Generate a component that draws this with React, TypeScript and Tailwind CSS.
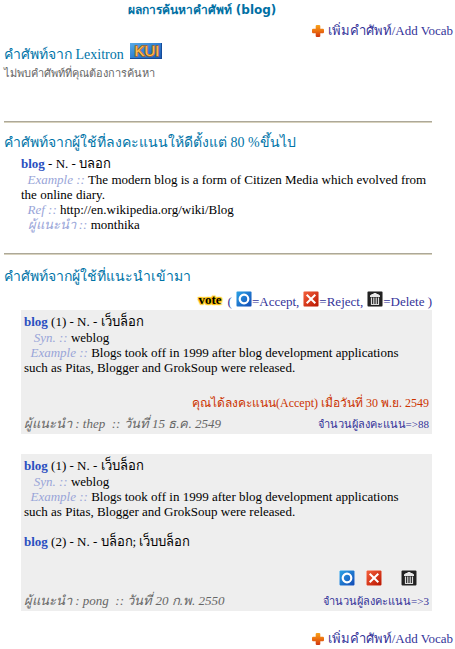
import type { ReactNode } from "react";

function PlusIcon() {
  return (
    <svg className="mr-1 h-3 w-3" viewBox="0 0 12 12" aria-hidden="true">
      <defs>
        <linearGradient id="plus" x1="0" y1="0" x2="0" y2="1">
          <stop offset="0" stopColor="#f7a21b" />
          <stop offset="0.5" stopColor="#ec7010" />
          <stop offset="1" stopColor="#cf3410" />
        </linearGradient>
      </defs>
      <path
        d="M4.500 0h3l.8.800V3.700H11.200l.8.800v3l-.8.800H8.300v2.900l-.8.800h-3l-.8-.8V8.300H.8L0 7.500v-3l.8-.8h2.900V.8z"
        fill="url(#plus)"
      />
    </svg>
  );
}

function AcceptIcon() {
  return (
    <svg className="h-4 w-4" viewBox="0 0 16 16" aria-hidden="true">
      <defs>
        <linearGradient id="accept" x1="0" y1="0" x2="1" y2="1">
          <stop offset="0" stopColor="#2ba3e6" />
          <stop offset="1" stopColor="#1349b4" />
        </linearGradient>
      </defs>
      <rect width="16" height="16" rx="1" fill="#f5f8fb" />
      <rect x="0.500" y="0.500" width="15" height="15" rx="1" fill="url(#accept)" />
      <circle cx="8" cy="8" r="4.300" fill="none" stroke="#fff" strokeWidth="2.200" />
    </svg>
  );
}

function RejectIcon() {
  return (
    <svg className="h-4 w-4" viewBox="0 0 16 16" aria-hidden="true">
      <defs>
        <linearGradient id="reject" x1="0" y1="0" x2="1" y2="1">
          <stop offset="0" stopColor="#f5603c" />
          <stop offset="1" stopColor="#b81500" />
        </linearGradient>
      </defs>
      <rect width="16" height="16" rx="1" fill="#fbf5f3" />
      <rect x="0.500" y="0.500" width="15" height="15" rx="1" fill="url(#reject)" />
      <path d="M3.700 3.700l8.600 8.600M12.300 3.700l-8.600 8.600" stroke="#fff" strokeWidth="2" />
    </svg>
  );
}

function DeleteIcon() {
  return (
    <svg className="h-4 w-4" viewBox="0 0 16 16" aria-hidden="true">
      <rect width="16" height="16" rx="1" fill="#f4f4f4" />
      <rect x="0.500" y="0.500" width="15" height="15" rx="1" fill="#222" />
      <path d="M3 6V4.500L5 3h1.500V2h3v1H11l2 1.500V6z" fill="#e8e8e8" />
      <path d="M4.500 6.500v7h7v-7M6.800 6.500v7M9.200 6.500v7" fill="none" stroke="#ddd" strokeWidth="1.200" />
    </svg>
  );
}

function KuiLogo() {
  return (
    <svg className="mb-2 ml-1.5 h-4 w-8" viewBox="0 0 32 16" role="img" aria-label="KUI">
      <defs>
        <linearGradient id="kui" x1="0" y1="0" x2="1" y2="1">
          <stop offset="0" stopColor="#5aace8" />
          <stop offset="0.5" stopColor="#2f7ed2" />
          <stop offset="1" stopColor="#1b58b0" />
        </linearGradient>
      </defs>
      <rect width="32" height="16" fill="url(#kui)" />
      <path d="M0 15.500h32M31.500 0v16" stroke="#164a98" />
      <text
        x="17"
        y="13"
        textAnchor="middle"
        fontFamily="'Liberation Sans Narrow', 'Liberation Sans', sans-serif"
        fontSize="15"
        fill="#ffbe50"
        stroke="#a86420"
        strokeWidth="1.500"
        paintOrder="stroke"
      >
        KUI
      </text>
    </svg>
  );
}

function AddVocab() {
  return (
    <div className="flex justify-end pr-0.5 text-[13px] leading-5 text-[#333399]">
      <a href="#add" className="flex items-center">
        <PlusIcon />
        เพิ่มคำศัพท์/Add Vocab
      </a>
    </div>
  );
}

function SectionTitle({ children }: { children: ReactNode }) {
  return (
    <h2 className="flex h-5 items-center text-[14px] leading-5 text-[#0074a8]">{children}</h2>
  );
}

function Rule() {
  return <hr className="h-0.5 border-t border-b border-t-[#aca899] border-b-[#d8d2bd]" />;
}

function Word({ no, children }: { no?: number; children: ReactNode }) {
  return (
    <p className="leading-4">
      <b className="text-[#2a4fc0]">blog</b> {no ? `(${no}) ` : ""}- N. - {children}
    </p>
  );
}

function Label({ children }: { children: ReactNode }) {
  return <i className="text-[#99a5d8]">{children} ::</i>;
}

function Weblog() {
  return (
    <>
      <Word no={1}>เว็บล็อก</Word>
      <p>
        &nbsp;&nbsp; <Label>Syn.</Label> weblog
      </p>
      <p className="pr-5">
        &nbsp; <Label>Example</Label> Blogs took off in 1999 after blog development applications
        such as Pitas, Blogger and GrokSoup were released.
      </p>
    </>
  );
}

function CardFooter({ by, date, votes }: { by: string; date: string; votes: number }) {
  return (
    <div className="flex items-center justify-between leading-5">
      <i className="text-[13px] text-[#666666]">
        ผู้แนะนำ : {by} &nbsp;:: {date}
      </i>
      <a href="#votes" className="text-[11px] text-[#333399]">
        จำนวนผู้ลงคะแนน=&gt;{votes}
      </a>
    </div>
  );
}

export default function App() {
  return (
    <div className="bg-white font-['Liberation_Serif',serif] text-[13px] leading-[15px] text-black">
      <h1 className="pr-[51px] text-center font-['DejaVu_Sans',sans-serif] text-[12px] leading-5 font-bold text-[#0070a4]">
        ผลการค้นหาคำศัพท์ (blog)
      </h1>
      <div className="mt-px">
        <AddVocab />
      </div>

      <main className="mr-[23px] ml-1">
        <section className="mt-1">
          <SectionTitle>
            คำศัพท์จาก Lexitron <KuiLogo />
          </SectionTitle>
          <p className="text-[11px] leading-4 text-[#666666]">ไม่พบคำศัพท์ที่คุณต้องการค้นหา</p>
        </section>

        <section className="mt-10">
          <Rule />
          <div className="mt-[10px]">
            <SectionTitle>คำศัพท์จากผู้ใช้ที่ลงคะแนนให้ดีตั้งแต่ 80 %ขึ้นไป</SectionTitle>
          </div>
          <div className="mt-[3px] ml-[17px]">
            <Word>บลอก</Word>
            <p>
              &nbsp; <Label>Example</Label> The modern blog is a form of Citizen Media which evolved
              from the online diary.
            </p>
            <p>
              &nbsp; <Label>Ref</Label> http://en.wikipedia.org/wiki/Blog
            </p>
            <p className="leading-4">
              &nbsp; <Label>ผู้แนะนำ</Label> monthika
            </p>
          </div>
        </section>

        <section className="mt-5">
          <Rule />
          <div className="mt-3">
            <SectionTitle>คำศัพท์จากผู้ใช้ที่แนะนำเข้ามา</SectionTitle>
          </div>
          <div className="mt-0.5 flex h-5 items-center justify-end text-[#333399]">
            <b className="mr-1.5 text-black [text-shadow:1px_1px_1px_#fcc000,-1px_-1px_1px_#fcc000,1px_-1px_1px_#fcc000,-1px_1px_1px_#fcc000,0_0_2px_#fcc000,0_0_2px_#fcc000]">
              vote
            </b>
            <span className="mt-1 mr-1">(</span>
            <AcceptIcon />
            <span className="mt-1 mr-1">=Accept,</span>
            <RejectIcon />
            <span className="mt-1 mr-1">=Reject,</span>
            <DeleteIcon />
            <span className="mt-1">=Delete )</span>
          </div>

          <article className="mt-px ml-[17px] bg-[#eeeeee] px-[3px] pt-1">
            <Weblog />
            <p className="mt-5 mb-[3px] text-right text-[12px] leading-4 text-[#cc3300]">
              คุณได้ลงคะแนน(Accept) เมื่อวันที่ 30 พ.ย. 2549
            </p>
            <CardFooter by="thep" date="วันที่ 15 ธ.ค. 2549" votes={88} />
          </article>

          <article className="mt-5 ml-[17px] bg-[#eeeeee] px-[3px] pt-1">
            <Weblog />
            <div className="mt-[15px]">
              <Word no={2}>บล็อก; เว็บบล็อก</Word>
            </div>
            <div className="mt-5 mb-[5px] flex justify-end pr-3">
              <button type="button" aria-label="Accept" className="mr-[11px]">
                <AcceptIcon />
              </button>
              <button type="button" aria-label="Reject" className="mr-[19px]">
                <RejectIcon />
              </button>
              <button type="button" aria-label="Delete">
                <DeleteIcon />
              </button>
            </div>
            <CardFooter by="pong" date="วันที่ 20 ก.พ. 2550" votes={3} />
          </article>
        </section>
      </main>

      <div className="mt-[18px]">
        <AddVocab />
      </div>
    </div>
  );
}
